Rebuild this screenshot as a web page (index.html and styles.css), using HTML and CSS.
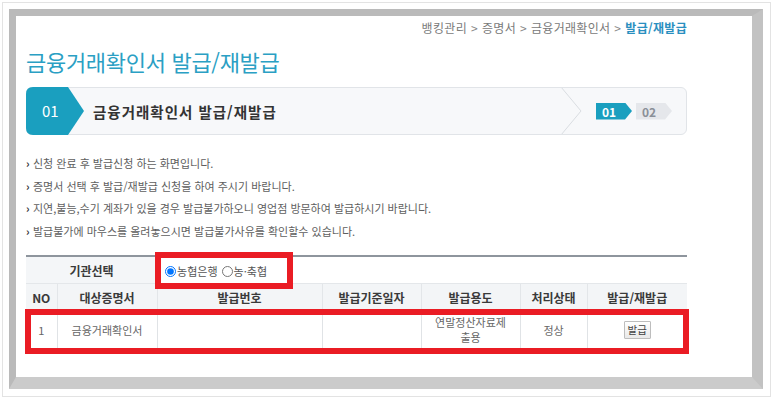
FILE: index.html
```html
<!DOCTYPE html>
<html lang="ko">
<head>
<meta charset="utf-8">
<title>금융거래확인서 발급/재발급</title>
<link rel="stylesheet" href="styles.css">
</head>
<body>
<div class="outer">
  <div class="frame">
    <div class="page">
      <div class="crumb">뱅킹관리<span class="sep">&gt;</span>증명서<span class="sep">&gt;</span>금융거래확인서<span class="sep">&gt;</span><span class="cur">발급/재발급</span></div>
      <h1 class="title">금융거래확인서 발급/재발급</h1>
      <div class="stepbar">
        <div class="steptab">01</div>
        <div class="steptitle">금융거래확인서 발급/재발급</div>
        <div class="spacer"></div>
        <svg class="chev" width="22" height="46" viewBox="0 0 22 46"><polyline points="0,-1 20,23 0,47" fill="none" stroke="#d9dde1" stroke-width="1"/></svg>
        <div class="badges">
          <span class="badge on">01</span>
          <span class="badge">02</span>
        </div>
      </div>
      <ul class="notes">
        <li>신청 완료 후 발급신청 하는 화면입니다.</li>
        <li>증명서 선택 후 발급/재발급 신청을 하여 주시기 바랍니다.</li>
        <li>지연,불능,수기 계좌가 있을 경우 발급불가하오니 영업점 방문하여 발급하시기 바랍니다.</li>
        <li>발급불가에 마우스를 올려놓으시면 발급불가사유를 확인할수 있습니다.</li>
      </ul>
      <div class="tablewrap">
        <table class="grid">
          <colgroup>
            <col class="c-no"><col class="c-doc"><col class="c-num"><col class="c-date"><col class="c-use"><col class="c-state"><col class="c-act">
          </colgroup>
          <tr class="r-org">
            <th colspan="2" class="org-label">기관선택</th>
            <td colspan="5" class="org-radios">
              <label class="rad"><input type="radio" name="org" checked>농협은행</label>
              <label class="rad"><input type="radio" name="org">농·축협</label>
            </td>
          </tr>
          <tr class="r-head">
            <th>NO</th><th>대상증명서</th><th>발급번호</th><th>발급기준일자</th><th>발급용도</th><th>처리상태</th><th>발급/재발급</th>
          </tr>
          <tr class="r-data">
            <td>1</td><td>금융거래확인서</td><td></td><td></td><td class="use">연말정산자료제<br>출용</td><td>정상</td><td><button class="btn" type="button">발급</button></td>
          </tr>
        </table>
        <div class="hl hl-radio"></div>
        <div class="hl hl-row"></div>
      </div>
    </div>
  </div>
</div>
</body>
</html>
```
FILE: styles.css
```css
html, body {
  margin: 0;
  padding: 0;
  background: #ffffff;
}
body {
  font-family: "Noto Sans CJK KR", "Noto Sans", sans-serif;
  color: #555;
}
.outer {
  margin: 2px;
  width: 769px;
  height: 395px;
  box-sizing: border-box;
  border: 1px solid #e3e3e3;
  padding: 6px 7px 7px 6px;
}
.frame {
  width: 754px;
  height: 380px;
  box-sizing: border-box;
  border-style: solid;
  border-width: 7px 11px 12px 7px;
  border-color: #bababa #c2c2c2 #cbcbcb #bababa;
  background: #fff;
}
.page {
  padding: 4px 65px 0 10px;
}
.crumb {
  text-align: right;
  font-size: 12px;
  line-height: 16px;
  color: #7a7a7a;
  letter-spacing: 0.3px;
}
.crumb .sep {
  margin: 0 4px;
  color: #888;
}
.crumb .cur {
  color: #2a8fc0;
  font-weight: 700;
}
.title {
  margin: 13px 0 0 0;
  font-size: 22px;
  line-height: 24px;
  font-weight: 400;
  color: #2b9fc4;
  letter-spacing: -0.3px;
}
.stepbar {
  margin-top: 14px;
  height: 48px;
  box-sizing: border-box;
  border: 1px solid #e1e4e8;
  border-radius: 6px;
  background: #f7f8fa;
  display: flex;
  align-items: center;
}
.steptab {
  margin: -1px 0 -1px -1px;
  width: 58px;
  height: 48px;
  flex: none;
  box-sizing: border-box;
  padding-left: 16px;
  background: #1a9fbf;
  color: #fff;
  font-size: 15px;
  line-height: 48px;
  clip-path: path('M7 0 H42 L58 24 L42 48 H7 Q0 48 0 41 V7 Q0 0 7 0 Z');
}
.steptitle {
  margin-left: 9px;
  font-size: 14.5px;
  font-weight: 700;
  color: #333;
  letter-spacing: 1px;
}
.spacer {
  flex: 1;
}
.chev {
  flex: none;
  display: block;
}
.badges {
  display: flex;
  gap: 4px;
  margin: 0 14px 0 13px;
}
.badge {
  display: block;
  width: 36px;
  height: 17px;
  box-sizing: border-box;
  padding-left: 6px;
  font-size: 12px;
  font-weight: 700;
  line-height: 17px;
  background: #e5e7eb;
  color: #8a8f98;
  clip-path: polygon(0 0, 29px 0, 36px 50%, 29px 100%, 0 100%);
}
.badge.on {
  background: #1a9fbf;
  color: #fff;
}
.notes {
  list-style: none;
  margin: 17px 0 0 0;
  padding: 0;
  font-size: 11px;
  line-height: 22.5px;
  color: #5e5e5e;
}
.notes li::before {
  content: "›";
  display: inline-block;
  width: 7px;
  color: #333;
  font-weight: 700;
}
.tablewrap {
  position: relative;
  margin-top: 13px;
}
.grid {
  width: 661px;
  table-layout: fixed;
  border-collapse: collapse;
  border-top: 2px solid #8e959d;
}
.c-no { width: 31px; }
.c-doc { width: 100px; }
.c-num { width: 165px; }
.c-date { width: 99px; }
.c-use { width: 99px; }
.c-state { width: 67px; }
.c-act { width: 100px; }
.grid th, .grid td {
  padding: 0;
  text-align: center;
  font-size: 11px;
}
.grid th {
  font-size: 12px;
  font-weight: 700;
  color: #3a3a3a;
}
.r-org th, .r-org td {
  height: 26px;
  border-bottom: 1px solid #e4e7ea;
}
.org-label {
  background: #f4f6f8;
}
.org-radios {
  text-align: left !important;
  padding-left: 8px !important;
  color: #555;
}
.rad {
  display: inline-flex;
  align-items: center;
  margin-right: 1px;
  vertical-align: middle;
}
.rad input {
  margin: 0 1px 0 0;
  width: 11px;
  height: 11px;
}
.r-head th {
  height: 27px;
  background: #f3f5f7;
  border-left: 1px solid #e3e6e9;
  border-bottom: 1px solid #e3e6e9;
}
.r-head th:first-child {
  border-left: none;
}
.r-data td {
  height: 36px;
  color: #666;
  border-left: 1px solid #e0e3e6;
  border-bottom: 1px solid #e0e3e6;
  line-height: 15px;
}
.r-data td:first-child {
  border-left: none;
}
.btn {
  width: 27px;
  height: 18px;
  padding: 0;
  font-family: inherit;
  font-size: 10.5px;
  line-height: 16px;
  color: #444;
  border: 1px solid #bdbdbd;
  border-radius: 1px;
  background: linear-gradient(#ffffff, #e9e9e9);
}
.hl {
  position: absolute;
  box-sizing: border-box;
  border: 6px solid #ea1c24;
}
.hl-radio {
  left: 129px;
  top: -3px;
  width: 138px;
  height: 37px;
}
.hl-row {
  left: -1px;
  top: 54px;
  width: 664px;
  height: 45px;
}
```
